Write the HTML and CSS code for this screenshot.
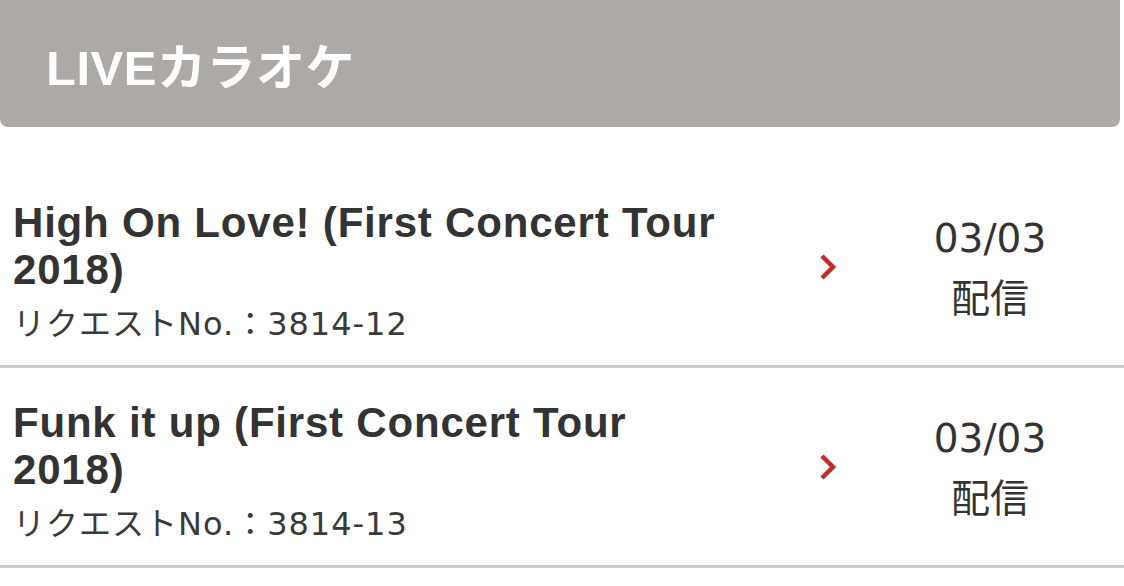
FILE: index.html
```html
<!DOCTYPE html>
<html lang="ja">
<head>
    <meta charset="UTF-8">
    <meta name="viewport" content="width=device-width, initial-scale=1.0">
    <title>LIVEカラオケ</title>
    <link rel="stylesheet" href="styles.css">
</head>
<body>
    <div class="section-header">LIVEカラオケ</div>
    <ul class="song-list">
        <li class="song">
            <a class="song-link" href="#">
                <div class="song-info">
                    <div class="song-title">High On Love! (First Concert Tour 2018)</div>
                    <div class="song-request">リクエストNo.：3814-12</div>
                </div>
                <span class="song-arrow">
                    <svg width="18" height="28" viewBox="0 0 18 28"><polyline points="3,3 14,14 3,25" fill="none" stroke="#c42a2a" stroke-width="4.5"/></svg>
                </span>
                <div class="song-date">03/03<br>配信</div>
            </a>
        </li>
        <li class="song">
            <a class="song-link" href="#">
                <div class="song-info">
                    <div class="song-title">Funk it up (First Concert Tour 2018)</div>
                    <div class="song-request">リクエストNo.：3814-13</div>
                </div>
                <span class="song-arrow">
                    <svg width="18" height="28" viewBox="0 0 18 28"><polyline points="3,3 14,14 3,25" fill="none" stroke="#c42a2a" stroke-width="4.5"/></svg>
                </span>
                <div class="song-date">03/03<br>配信</div>
            </a>
        </li>
    </ul>
</body>
</html>
```

FILE: styles.css
```css
body {
    margin: 0;
    background: #fff;
    font-family: 'Liberation Sans', 'Noto Sans CJK JP', sans-serif;
    color: #333;
}
.section-header {
    height: 127px;
    display: flex;
    align-items: center;
    margin-right: 4px;
    padding-left: 46px;
    background: #aca9a6;
    color: #fff;
    font-size: 49px;
    font-weight: bold;
    letter-spacing: 0.5px;
    border-radius: 0 0 8px 8px;
}
.song-list {
    list-style: none;
    margin: 41px 0 0;
    padding: 0;
}
.song {
    border-bottom: 3px solid #cbcbcb;
}
.song-link {
    display: flex;
    align-items: center;
    min-height: 197px;
    padding-left: 13px;
    color: inherit;
    text-decoration: none;
}
.song-info {
    width: 720px;
    padding-top: 12px;
}
.song-title {
    font-size: 42px;
    font-weight: bold;
    line-height: 47px;
    letter-spacing: 0.8px;
    color: #333;
}
.song-request {
    margin-top: 9px;
    font-family: 'DejaVu Sans', 'Noto Sans CJK JP', sans-serif;
    font-size: 32px;
    line-height: 44px;
    letter-spacing: 1px;
    color: #3a3a3a;
}
.song-arrow {
    display: flex;
    margin-left: 86px;
}
.song-date {
    width: 250px;
    margin-left: 28px;
    padding-top: 4px;
    text-align: center;
    font-family: 'DejaVu Sans', 'Noto Sans CJK JP', sans-serif;
    font-size: 39px;
    line-height: 60px;
    color: #333;
}
```
